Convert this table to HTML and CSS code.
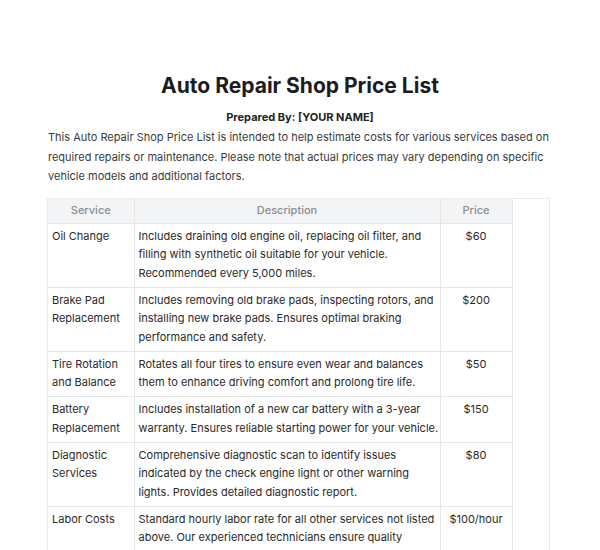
FILE: index.html
```html
<!DOCTYPE html>
<html>
<head>
<meta charset="utf-8">
<link rel="stylesheet" href="styles.css">
</head>
<body>
<div class="page">
  <h1 class="title">Auto Repair Shop Price List</h1>
  <p class="prepared">Prepared By: [YOUR NAME]</p>
  <p class="intro">This Auto Repair Shop Price List is intended to help estimate costs for various services based on required repairs or maintenance. Please note that actual prices may vary depending on specific vehicle models and additional factors.</p>
  <div class="table-wrap">
    <table class="prices">
      <colgroup><col class="c-service"><col class="c-desc"><col class="c-price"></colgroup>
      <thead>
        <tr><th>Service</th><th>Description</th><th>Price</th></tr>
      </thead>
      <tbody>
        <tr><td>Oil Change</td><td>Includes draining old engine oil, replacing oil filter, and filling with synthetic oil suitable for your vehicle. Recommended every 5,000 miles.</td><td class="price">$60</td></tr>
        <tr><td>Brake Pad Replacement</td><td>Includes removing old brake pads, inspecting rotors, and installing new brake pads. Ensures optimal braking performance and safety.</td><td class="price">$200</td></tr>
        <tr><td>Tire Rotation and Balance</td><td>Rotates all four tires to ensure even wear and balances them to enhance driving comfort and prolong tire life.</td><td class="price">$50</td></tr>
        <tr><td>Battery Replacement</td><td>Includes installation of a new car battery with a 3-year warranty. Ensures reliable starting power for your vehicle.</td><td class="price">$150</td></tr>
        <tr><td>Diagnostic Services</td><td>Comprehensive diagnostic scan to identify issues indicated by the check engine light or other warning lights. Provides detailed diagnostic report.</td><td class="price">$80</td></tr>
        <tr><td>Labor Costs</td><td>Standard hourly labor rate for all other services not listed above. Our experienced technicians ensure quality workmanship on every job.</td><td class="price">$100/hour</td></tr>
      </tbody>
    </table>
  </div>
</div>
</body>
</html>
```
FILE: styles.css
```css
html, body {
  margin: 0;
  padding: 0;
  background: #ffffff;
}
body {
  font-family: Inter, "Liberation Sans", sans-serif;
  color: #2b2b2b;
}
.page {
  padding: 71px 48px 0 48px;
}
.title {
  margin: 0;
  text-align: center;
  font-size: 21px;
  line-height: 30px;
  font-weight: 700;
  color: #1b1b22;
}
.prepared {
  margin: 8px 0 0;
  text-align: center;
  font-size: 11px;
  line-height: 16px;
  font-weight: 700;
  color: #222;
}
.intro {
  margin: 3px 0 0;
  font-size: 11px;
  line-height: 19.5px;
  color: #3a3a3a;
}
.table-wrap {
  margin: 11px 2px 0 -1px;
  border: 1px solid #ececec;
  border-bottom: none;
  height: 400px;
}
.prices {
  border-collapse: collapse;
  table-layout: fixed;
  width: 464px;
  font-size: 11px;
  line-height: 18.7px;
  color: #2a2a2a;
}
.c-service { width: 86px; }
.c-desc { width: 306px; }
.c-price { width: 72px; }
.prices th {
  background: #f3f4f6;
  color: #8a8d93;
  font-weight: 500;
  height: 24px;
  padding: 0 4px;
  border: 1px solid #e6e6e6;
  border-top: none;
}
.prices th:first-child { border-left: none; }
.prices td {
  vertical-align: top;
  padding: 3px 4px 4px;
  border: 1px solid #e6e6e6;
}
.prices td:first-child { border-left: none; }
.prices td:nth-child(2) { padding-right: 1px; }
.price { text-align: center; }
```
